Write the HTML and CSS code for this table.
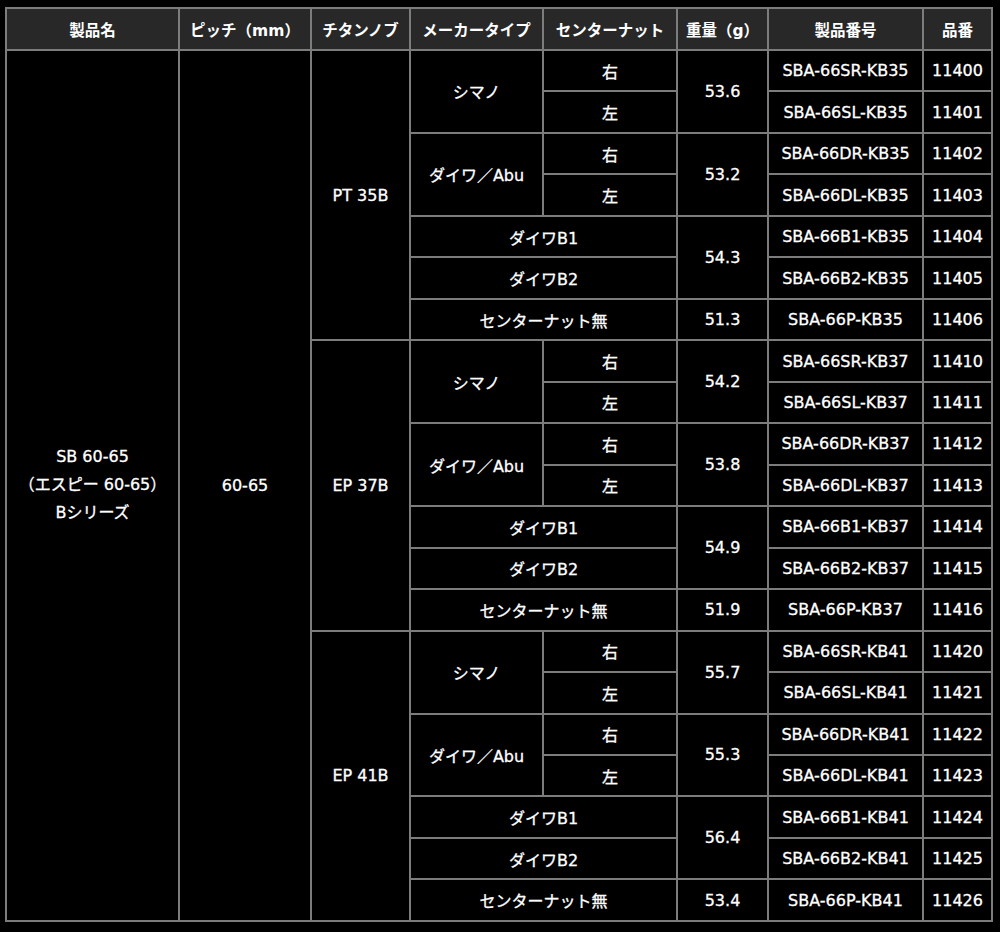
FILE: index.html
```html
<!DOCTYPE html>
<html lang="ja">
<head>
<meta charset="utf-8">
<title>SB 60-65 Bシリーズ</title>
<link rel="stylesheet" href="styles.css">
</head>
<body>
<table class="spec">
  <colgroup>
    <col class="c-name"><col class="c-pitch"><col class="c-knob"><col class="c-maker"><col class="c-nut"><col class="c-weight"><col class="c-code"><col class="c-no">
  </colgroup>
  <thead>
    <tr>
      <th>製品名</th><th>ピッチ（mm）</th><th>チタンノブ</th><th>メーカータイプ</th><th>センターナット</th><th>重量（g）</th><th>製品番号</th><th>品番</th>
    </tr>
  </thead>
  <tbody>
    <tr>
      <td rowspan="21" class="name">SB 60-65<br>（エスピー 60-65）<br>Bシリーズ</td>
      <td rowspan="21">60-65</td>
      <td rowspan="7">PT 35B</td>
      <td rowspan="2">シマノ</td><td>右</td><td rowspan="2">53.6</td><td>SBA-66SR-KB35</td><td>11400</td>
    </tr>
    <tr><td>左</td><td>SBA-66SL-KB35</td><td>11401</td></tr>
    <tr><td rowspan="2">ダイワ／Abu</td><td>右</td><td rowspan="2">53.2</td><td>SBA-66DR-KB35</td><td>11402</td></tr>
    <tr><td>左</td><td>SBA-66DL-KB35</td><td>11403</td></tr>
    <tr><td colspan="2">ダイワB1</td><td rowspan="2">54.3</td><td>SBA-66B1-KB35</td><td>11404</td></tr>
    <tr><td colspan="2">ダイワB2</td><td>SBA-66B2-KB35</td><td>11405</td></tr>
    <tr><td colspan="2">センターナット無</td><td>51.3</td><td>SBA-66P-KB35</td><td>11406</td></tr>

    <tr><td rowspan="7">EP 37B</td><td rowspan="2">シマノ</td><td>右</td><td rowspan="2">54.2</td><td>SBA-66SR-KB37</td><td>11410</td></tr>
    <tr><td>左</td><td>SBA-66SL-KB37</td><td>11411</td></tr>
    <tr><td rowspan="2">ダイワ／Abu</td><td>右</td><td rowspan="2">53.8</td><td>SBA-66DR-KB37</td><td>11412</td></tr>
    <tr><td>左</td><td>SBA-66DL-KB37</td><td>11413</td></tr>
    <tr><td colspan="2">ダイワB1</td><td rowspan="2">54.9</td><td>SBA-66B1-KB37</td><td>11414</td></tr>
    <tr><td colspan="2">ダイワB2</td><td>SBA-66B2-KB37</td><td>11415</td></tr>
    <tr><td colspan="2">センターナット無</td><td>51.9</td><td>SBA-66P-KB37</td><td>11416</td></tr>

    <tr><td rowspan="7">EP 41B</td><td rowspan="2">シマノ</td><td>右</td><td rowspan="2">55.7</td><td>SBA-66SR-KB41</td><td>11420</td></tr>
    <tr><td>左</td><td>SBA-66SL-KB41</td><td>11421</td></tr>
    <tr><td rowspan="2">ダイワ／Abu</td><td>右</td><td rowspan="2">55.3</td><td>SBA-66DR-KB41</td><td>11422</td></tr>
    <tr><td>左</td><td>SBA-66DL-KB41</td><td>11423</td></tr>
    <tr><td colspan="2">ダイワB1</td><td rowspan="2">56.4</td><td>SBA-66B1-KB41</td><td>11424</td></tr>
    <tr><td colspan="2">ダイワB2</td><td>SBA-66B2-KB41</td><td>11425</td></tr>
    <tr><td colspan="2">センターナット無</td><td>53.4</td><td>SBA-66P-KB41</td><td>11426</td></tr>
  </tbody>
</table>
</body>
</html>
```
FILE: styles.css
```css
html, body {
  margin: 0;
  padding: 0;
  background: #000;
}
body {
  padding: 7px 0 0 5px;
  font-family: "DejaVu Sans", "Noto Sans CJK JP", sans-serif;
  color: #fff;
}
.spec {
  border-collapse: collapse;
  table-layout: fixed;
  width: 986px;
  font-size: 16px;
}
.c-name { width: 173px; }
.c-pitch { width: 132px; }
.c-knob { width: 99px; }
.c-maker { width: 133px; }
.c-nut { width: 134px; }
.c-weight { width: 91px; }
.c-code { width: 155px; }
.c-no { width: 69px; }
.spec th, .spec td {
  border: 2px solid #7c7c7c;
  padding: 0;
  text-align: center;
  vertical-align: middle;
  white-space: nowrap;
}
.spec td {
  -webkit-text-stroke: 0.3px #fff;
}
.spec th {
  height: 40px;
  background: #282828;
  font-weight: bold;
  font-size: 15.5px;
}
.spec tbody tr {
  height: 41.48px;
}
.spec td.name {
  line-height: 28px;
}
```
